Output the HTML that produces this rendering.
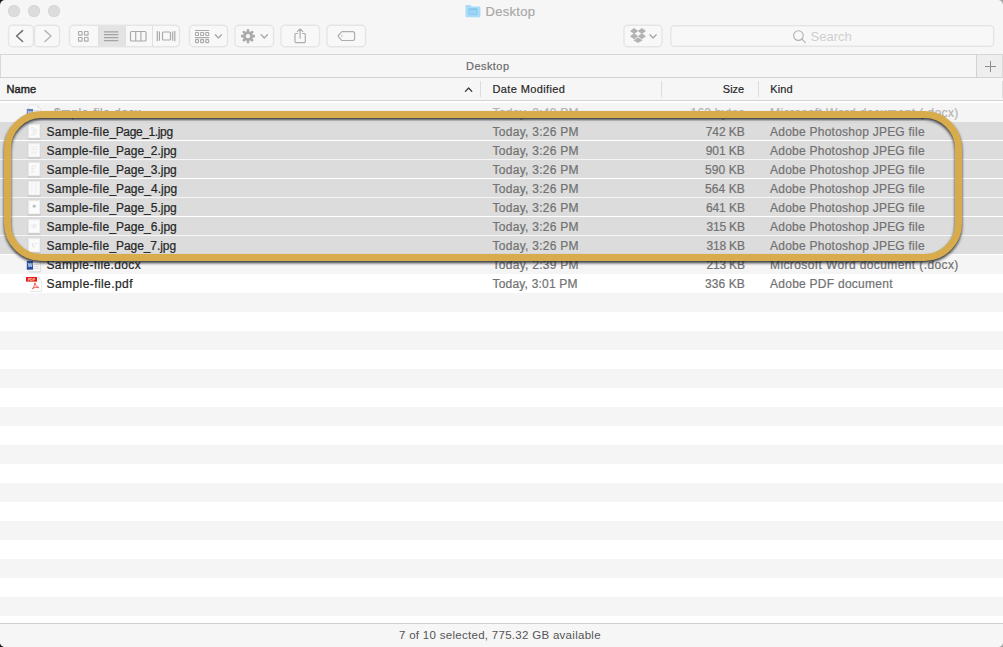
<!DOCTYPE html>
<html>
<head>
<meta charset="utf-8">
<title>Desktop</title>
<style>
html,body{margin:0;padding:0;}
body{width:1003px;height:647px;overflow:hidden;background:linear-gradient(to right,#161616 0,#161616 50%,#a4a4a4 50%,#a4a4a4 100%);font-family:"Liberation Sans",sans-serif;font-size:13px;color:#262626;position:relative;}
#win{position:absolute;left:0;top:0;width:1003px;height:647px;background:#f6f6f6;border-radius:5px 5px 5px 5px;overflow:hidden;}
.abs{position:absolute;}
/* traffic lights */
.tl{position:absolute;top:5px;width:12px;height:12px;border-radius:50%;background:#dcdcdc;box-shadow:inset 0 0 0 0.5px #d0d0d0;}
#title{position:absolute;top:4px;left:485.5px;font-size:13px;letter-spacing:0.3px;color:#a8a8a8;line-height:16px;-webkit-text-stroke:0.2px #a8a8a8;}
#tbline{position:absolute;left:0;top:54px;width:1003px;height:1px;background:#d6d6d6;}
#tabbar{position:absolute;left:0;top:55px;width:1003px;height:22px;background:#f6f6f6;}
#tabbar .t{position:absolute;left:466px;top:4px;font-size:11px;letter-spacing:0.45px;color:#6a6a6a;line-height:14px;-webkit-text-stroke:0.18px #6a6a6a;}
#tabline{position:absolute;left:0;top:77px;width:1003px;height:1px;background:#d2d2d2;}
#plus{position:absolute;left:976px;top:55px;width:27px;height:22px;background:#eeeeee;border-left:1px solid #d2d2d2;box-sizing:border-box;}
/* header */
#hdr{position:absolute;left:0;top:78px;width:1003px;height:22px;background:#f6f6f6;}
#hdr span{position:absolute;top:4px;font-size:11px;line-height:14px;color:#262626;white-space:nowrap;-webkit-text-stroke:0.18px #262626;}
.sep{position:absolute;top:81px;width:1px;height:16px;background:#dcdcdc;}
#hdrline{position:absolute;left:0;top:100px;width:1003px;height:1px;background:#d4d4d4;}
/* rows */
#list{position:absolute;left:0;top:101px;width:1003px;height:522px;background:#fff repeating-linear-gradient(to bottom,#f5f5f5 0,#f5f5f5 19px,#fff 19px,#fff 38px) 0 2px no-repeat;overflow:hidden;}
.row{position:absolute;left:0;width:1003px;height:19px;}
.row.s::before{content:"";position:absolute;left:0;top:0;width:1003px;height:18px;background:#dcdcdc;}
.row>span{position:absolute;top:3px;line-height:15px;font-size:12px;white-space:nowrap;-webkit-text-stroke:0.22px currentColor;}
.row .n{left:46.5px;color:#262626;}
.row .d{left:492.5px;color:#727272;}
.row .z{right:258.2px;color:#727272;text-align:right;}
.row .k{left:770px;color:#727272;}
.row.h .n{color:#a9a9a9;}
.row.h .d,.row.h .z,.row.h .k{color:#b4b4b4;}
.fi{position:absolute;left:26px;top:0;}
#search{position:absolute;left:810.5px;top:29px;font-size:13px;line-height:16px;color:#cfcfcf;}
/* status bar */
#stline{position:absolute;left:0;top:623px;width:1003px;height:1px;background:#cfcfcf;}
#status{position:absolute;left:0;top:624px;width:1003px;height:23px;background:#f6f6f6;text-indent:399px;font-size:11.5px;letter-spacing:0.29px;line-height:22px;color:#555;white-space:nowrap;}
/* annotation */
#hl{position:absolute;left:0;top:100px;filter:drop-shadow(0 2.5px 1.5px rgba(28,30,38,.9));}
</style>
</head>
<body>
<div id="win">
  <div class="tl" style="left:8px"></div>
  <div class="tl" style="left:28px"></div>
  <div class="tl" style="left:48px"></div>
  <div id="title">Desktop</div>

  
  <svg class="abs" style="left:0;top:0" width="1003" height="54" viewBox="0 0 1003 54" fill="none">
    <!-- button frames -->
    <g fill="#f8f8f8" stroke="#e5e5e5" stroke-width="1.4">
      <rect x="8.5" y="25.25" width="25" height="21.5" rx="4"/>
      <rect x="34.5" y="25.25" width="25" height="21.5" rx="4"/>
      <rect x="69.5" y="25.25" width="110" height="21.5" rx="4"/>
      <rect x="189.5" y="25.25" width="38" height="21.5" rx="4"/>
      <rect x="235" y="25.25" width="38.5" height="21.5" rx="4"/>
      <rect x="281" y="25.25" width="38.5" height="21.5" rx="4"/>
      <rect x="327" y="25.25" width="38.5" height="21.5" rx="4"/>
      <rect x="624" y="25.25" width="38" height="21.5" rx="4"/>
      <rect x="670.8" y="25.7" width="322.9" height="20.5" rx="3.5"/>
    </g>
    <!-- selected segment -->
    <rect x="98.5" y="26" width="27" height="20.2" fill="#e3e3e3"/>
    <path d="M98.5 26V46M125.5 26V46M152.5 26V46" stroke="#e0e0e0" stroke-width="1"/>
    <!-- back / forward -->
    <path d="M22.6 30.6L16.6 36L22.6 41.5" stroke="#6e6e6e" stroke-width="1.5" stroke-linecap="round" stroke-linejoin="round"/>
    <path d="M45 30.6L51 36L45 41.5" stroke="#b6b6b6" stroke-width="1.5" stroke-linecap="round" stroke-linejoin="round"/>
    <!-- icon view -->
    <g stroke="#ababab" stroke-width="1.15">
      <rect x="78.5" y="31.5" width="3.6" height="3.6" rx="0.4"/>
      <rect x="84.5" y="31.5" width="3.6" height="3.6" rx="0.4"/>
      <rect x="78.5" y="37.5" width="3.6" height="3.6" rx="0.4"/>
      <rect x="84.5" y="37.5" width="3.6" height="3.6" rx="0.4"/>
    </g>
    <!-- list view -->
    <path d="M104 31.8H118.3M104 34.7H118.3M104 37.7H118.3M104 40.6H118.3" stroke="#a2a2a2" stroke-width="1.2"/>
    <!-- column view -->
    <g stroke="#a8a8a8" stroke-width="1.15">
      <rect x="130.5" y="31.5" width="15.5" height="9.5" rx="1"/>
      <path d="M135.7 31.5V41M140.9 31.5V41"/>
    </g>
    <!-- cover flow -->
    <g stroke="#a8a8a8" stroke-width="1.15">
      <path d="M157.3 31V41.3M159.4 31.5V40.8M172.7 31.5V40.8M174.8 31V41.3"/>
      <rect x="162.5" y="32" width="8" height="8" rx="1"/>
    </g>
    <!-- arrange -->
    <g stroke="#a9a9a9" stroke-width="1.1">
      <path d="M195 30.5H209.3M195 37.6H209.3"/>
      <rect x="195.5" y="32.5" width="3" height="3" rx="0.6"/>
      <rect x="200.6" y="32.5" width="3" height="3" rx="0.6"/>
      <rect x="205.7" y="32.5" width="3" height="3" rx="0.6"/>
      <rect x="195.5" y="39.6" width="3" height="3" rx="0.6"/>
      <rect x="200.6" y="39.6" width="3" height="3" rx="0.6"/>
      <rect x="205.7" y="39.6" width="3" height="3" rx="0.6"/>
    </g>
    <path d="M215.4 34.8L218.4 38L221.4 34.8" stroke="#a6a6a6" stroke-width="1.3" stroke-linecap="round" stroke-linejoin="round"/>
    <!-- gear -->
    <g transform="translate(248 36.15)">
      <g fill="#aaaaaa">
        <rect x="-1.3" y="-7" width="2.6" height="14" rx="0.5"/>
        <rect x="-1.3" y="-7" width="2.6" height="14" rx="0.5" transform="rotate(45)"/>
        <rect x="-1.3" y="-7" width="2.6" height="14" rx="0.5" transform="rotate(90)"/>
        <rect x="-1.3" y="-7" width="2.6" height="14" rx="0.5" transform="rotate(135)"/>
        <circle r="4.9"/>
      </g>
      <circle r="2.1" fill="#f8f8f8"/>
    </g>
    <path d="M261.2 34.8L264.3 38L267.4 34.8" stroke="#a6a6a6" stroke-width="1.3" stroke-linecap="round" stroke-linejoin="round"/>
    <!-- share -->
    <g stroke="#adadad" stroke-width="1.2" stroke-linecap="round" stroke-linejoin="round">
      <path d="M297.6 33.5H295.8Q295 33.5 295 34.3V41.8Q295 42.6 295.8 42.6H304.5Q305.3 42.6 305.3 41.8V34.3Q305.3 33.5 304.5 33.5H302.7"/>
      <path d="M300.1 38.2V29M297.3 31.6L300.1 28.8L302.9 31.6"/>
    </g>
    <!-- tag -->
    <g stroke="#adadad" stroke-width="1.2" stroke-linejoin="round">
      <path d="M342.4 31.7H352.7Q354.6 31.7 354.6 33.6V38.6Q354.6 40.5 352.7 40.5H342.4Q341.8 40.5 341.4 40.1L338.4 36.7Q337.9 36.1 338.4 35.5L341.4 32.1Q341.8 31.7 342.4 31.7Z"/>
      <circle cx="341.8" cy="36.1" r="0.75" fill="#b0b0b0" stroke="none"/>
    </g>
    <!-- dropbox -->
    <g fill="#b2b2b2">
      <path d="M634.1 28.05L638.2 31L634.1 33.95L630 31Z"/>
      <path d="M641.9 28.05L646 31L641.9 33.95L637.8 31Z"/>
      <path d="M634.1 33.35L638.2 36.3L634.1 39.25L630 36.3Z"/>
      <path d="M641.9 33.35L646 36.3L641.9 39.25L637.8 36.3Z"/>
      <path d="M638 37.6L642.6 40.3L638 43L633.4 40.3Z"/>
    </g>
    <path d="M650 34.8L653.1 38L656.2 34.8" stroke="#a6a6a6" stroke-width="1.3" stroke-linecap="round" stroke-linejoin="round"/>
    <!-- search -->
    <g stroke="#b2b2b2" stroke-width="1.1" stroke-linecap="round">
      <circle cx="798.4" cy="35.6" r="4.8"/>
      <path d="M801.9 39.1L805.5 42.7"/>
    </g>
    <!-- folder -->
    <path d="M465.5 6.2Q465.5 5 466.7 5H470.3L471.8 6.6H479.2Q480.4 6.6 480.4 7.8V16Q480.4 17.2 479.2 17.2H466.7Q465.5 17.2 465.5 16Z" fill="#a9dcf8"/>
    <rect x="469" y="8.7" width="8" height="6" fill="#9cd4f6" stroke="#86c7ee" stroke-width="0.9"/>
    <path d="M469 9.4H477" stroke="#86c7ee" stroke-width="1"/>
    <!-- plus -->
  </svg>
  <div id="search">Search</div>
  <div id="tbline"></div>
  <div id="tabbar"><div class="t">Desktop</div></div>
  <div id="plus"></div>
  <div id="tabline"></div>

  <div id="hdr">
    <span style="left:6.5px;-webkit-text-stroke:0.45px #262626;letter-spacing:0.1px">Name</span>
    <span style="left:492.5px;letter-spacing:0.38px">Date Modified</span>
    <span style="right:258.8px">Size</span>
    <span style="left:770.3px;letter-spacing:0.1px">Kind</span>
  </div>
  <div class="sep" style="left:480px"></div>
  <div class="sep" style="left:661px"></div>
  <div class="sep" style="left:758px"></div>
  <div id="hdrline"></div>

  <svg class="abs" style="left:0;top:54px" width="1003" height="48" viewBox="0 54 1003 48" fill="none">
    <path d="M0.5 55V77M1002.5 55V77" stroke="#d9d9d9" stroke-width="1"/>
    <path d="M985 66.5H996M990.5 61V72" stroke="#8e8e8e" stroke-width="1"/>
    <path d="M465.4 91.4L468.6 88L471.8 91.4" stroke="#3a3a3a" stroke-width="1.3" stroke-linecap="round" stroke-linejoin="round"/>
    <path d="M1002.5 81V98" stroke="#dcdcdc" stroke-width="1"/>
  </svg>
  <div id="list">
    <div class="row h" style="top:2px"><svg class="fi" width="18" height="19" viewBox="0 0 18 19" style="opacity:0.7"><path d="M3 2.9H11.2L14.4 6V17.2H3Z" fill="#c4c4c4"/><path d="M2.6 2H11.2L14.3 5.1V16.7H2.6Z" fill="#fbfbfb" stroke="#cdcdcd" stroke-width="0.4"/><path d="M11.2 2V5.1H14.3Z" fill="#dcdcdc"/><path d="M8 7.5H13M8 9.5H13M8 11.5H13M8 13.5H13" stroke="#dcdcdc" stroke-width="1"/><rect x="0.8" y="5.9" width="6.3" height="8.8" fill="#2a4f9e"/><text x="4.1" y="12.3" font-family="Liberation Sans,sans-serif" font-weight="700" font-size="5" fill="#dfe7fa" text-anchor="middle">W</text></svg><span class="n" style="letter-spacing:0.432px">~$mple-file.docx</span><span class="d" style="letter-spacing:0.277px">Today, 2:40 PM</span><span class="z" style="letter-spacing:0.25px">162 bytes</span><span class="k" style="letter-spacing:0.393px">Microsoft Word document (.docx)</span></div>
    <div class="row s" style="top:21px"><svg class="fi" width="18" height="19" viewBox="0 0 18 19"><rect x="1.4" y="1.8" width="13.6" height="15.6" rx="1" fill="#000" fill-opacity="0.05"/><rect x="2" y="2.6" width="12.4" height="14.7" rx="0.6" fill="#000" fill-opacity="0.16"/><rect x="1.8" y="1.8" width="12.8" height="14.8" rx="0.6" fill="#efefef" stroke="#cfcfcf" stroke-width="0.4"/><rect x="3.3" y="3.2" width="9.8" height="12.2" fill="#fbfbfb"/><path d="M5 5.5H8M5 7H10.5M6.5 8.5H11M6.5 10H11M6.5 11.5H10.5M5 13H9" stroke="#e4e4e4" stroke-width="0.7"/></svg><span class="n"><span style="letter-spacing:0.261px">Sample-file</span><span style="letter-spacing:-0.371px">_Page_1.jpg</span></span><span class="d" style="letter-spacing:0.277px">Today, 3:26 PM</span><span class="z" style="letter-spacing:-0.035px">742 KB</span><span class="k" style="letter-spacing:0.243px">Adobe Photoshop JPEG file</span></div>
    <div class="row s" style="top:40px"><svg class="fi" width="18" height="19" viewBox="0 0 18 19"><rect x="1.4" y="1.8" width="13.6" height="15.6" rx="1" fill="#000" fill-opacity="0.05"/><rect x="2" y="2.6" width="12.4" height="14.7" rx="0.6" fill="#000" fill-opacity="0.16"/><rect x="1.8" y="1.8" width="12.8" height="14.8" rx="0.6" fill="#efefef" stroke="#cfcfcf" stroke-width="0.4"/><rect x="3.3" y="3.2" width="9.8" height="12.2" fill="#fbfbfb"/><path d="M4.8 5.5H11.6M4.8 7H11.6M4.8 8.5H11.6M4.8 10H11.6M4.8 11.5H11.6M4.8 13H11.6" stroke="#ebebeb" stroke-width="0.7"/></svg><span class="n"><span style="letter-spacing:0.261px">Sample-file</span><span style="letter-spacing:-0.001px">_Page_2.jpg</span></span><span class="d" style="letter-spacing:0.277px">Today, 3:26 PM</span><span class="z" style="letter-spacing:-0.035px">901 KB</span><span class="k" style="letter-spacing:0.243px">Adobe Photoshop JPEG file</span></div>
    <div class="row s" style="top:59px"><svg class="fi" width="18" height="19" viewBox="0 0 18 19"><rect x="1.4" y="1.8" width="13.6" height="15.6" rx="1" fill="#000" fill-opacity="0.05"/><rect x="2" y="2.6" width="12.4" height="14.7" rx="0.6" fill="#000" fill-opacity="0.16"/><rect x="1.8" y="1.8" width="12.8" height="14.8" rx="0.6" fill="#efefef" stroke="#cfcfcf" stroke-width="0.4"/><rect x="3.3" y="3.2" width="9.8" height="12.2" fill="#fbfbfb"/><path d="M6 5.5H10M5 7H10.5M5 8.5H9M5 10H8M5 11.5H9.5M5 13H7.5" stroke="#e6e6e6" stroke-width="0.7"/></svg><span class="n"><span style="letter-spacing:0.261px">Sample-file</span><span style="letter-spacing:-0.001px">_Page_3.jpg</span></span><span class="d" style="letter-spacing:0.277px">Today, 3:26 PM</span><span class="z" style="letter-spacing:0.085px">590 KB</span><span class="k" style="letter-spacing:0.243px">Adobe Photoshop JPEG file</span></div>
    <div class="row s" style="top:78px"><svg class="fi" width="18" height="19" viewBox="0 0 18 19"><rect x="1.4" y="1.8" width="13.6" height="15.6" rx="1" fill="#000" fill-opacity="0.05"/><rect x="2" y="2.6" width="12.4" height="14.7" rx="0.6" fill="#000" fill-opacity="0.16"/><rect x="1.8" y="1.8" width="12.8" height="14.8" rx="0.6" fill="#efefef" stroke="#cfcfcf" stroke-width="0.4"/><rect x="3.3" y="3.2" width="9.8" height="12.2" fill="#fbfbfb"/><path d="M5 5H7M8.5 5H11.5M5 7H6.5M8.5 7H11.5M5 9H6.5M8.5 9H11.5M5 11H6.5M8.5 11H11.5M5 13H6.5M8.5 13H11" stroke="#e4e4e4" stroke-width="0.7"/></svg><span class="n"><span style="letter-spacing:0.261px">Sample-file</span><span style="letter-spacing:0.029px">_Page_4.jpg</span></span><span class="d" style="letter-spacing:0.277px">Today, 3:26 PM</span><span class="z" style="letter-spacing:0.085px">564 KB</span><span class="k" style="letter-spacing:0.243px">Adobe Photoshop JPEG file</span></div>
    <div class="row s" style="top:97px"><svg class="fi" width="18" height="19" viewBox="0 0 18 19"><rect x="1.4" y="1.8" width="13.6" height="15.6" rx="1" fill="#000" fill-opacity="0.05"/><rect x="2" y="2.6" width="12.4" height="14.7" rx="0.6" fill="#000" fill-opacity="0.16"/><rect x="1.8" y="1.8" width="12.8" height="14.8" rx="0.6" fill="#efefef" stroke="#cfcfcf" stroke-width="0.4"/><rect x="3.3" y="3.2" width="9.8" height="12.2" fill="#fbfbfb"/><circle cx="8.2" cy="8.3" r="1.7" fill="#c9d3cf"/><circle cx="7.6" cy="7.8" r="0.7" fill="#b9a7c9"/><circle cx="8.9" cy="8.0" r="0.7" fill="#9fc3ae"/></svg><span class="n"><span style="letter-spacing:0.261px">Sample-file</span><span style="letter-spacing:-0.001px">_Page_5.jpg</span></span><span class="d" style="letter-spacing:0.277px">Today, 3:26 PM</span><span class="z" style="letter-spacing:-0.075px">641 KB</span><span class="k" style="letter-spacing:0.243px">Adobe Photoshop JPEG file</span></div>
    <div class="row s" style="top:116px"><svg class="fi" width="18" height="19" viewBox="0 0 18 19"><rect x="1.4" y="1.8" width="13.6" height="15.6" rx="1" fill="#000" fill-opacity="0.05"/><rect x="2" y="2.6" width="12.4" height="14.7" rx="0.6" fill="#000" fill-opacity="0.16"/><rect x="1.8" y="1.8" width="12.8" height="14.8" rx="0.6" fill="#efefef" stroke="#cfcfcf" stroke-width="0.4"/><rect x="3.3" y="3.2" width="9.8" height="12.2" fill="#fbfbfb"/><path d="M6 7.2V9.6M7.4 7.2L8 9.6L8.6 7.2M10 7.2V9.6M6 10.6H10.4" stroke="#dedede" stroke-width="0.6" fill="none"/></svg><span class="n"><span style="letter-spacing:0.261px">Sample-file</span><span style="letter-spacing:-0.001px">_Page_6.jpg</span></span><span class="d" style="letter-spacing:0.277px">Today, 3:26 PM</span><span class="z" style="letter-spacing:-0.155px">315 KB</span><span class="k" style="letter-spacing:0.243px">Adobe Photoshop JPEG file</span></div>
    <div class="row s" style="top:135px"><svg class="fi" width="18" height="19" viewBox="0 0 18 19"><rect x="1.4" y="1.8" width="13.6" height="15.6" rx="1" fill="#000" fill-opacity="0.05"/><rect x="2" y="2.6" width="12.4" height="14.7" rx="0.6" fill="#000" fill-opacity="0.16"/><rect x="1.8" y="1.8" width="12.8" height="14.8" rx="0.6" fill="#efefef" stroke="#cfcfcf" stroke-width="0.4"/><rect x="3.3" y="3.2" width="9.8" height="12.2" fill="#fbfbfb"/><path d="M5.6 8.2L6.6 7.2V10M7.8 7.4L9 8.4L7.8 9.6M9.6 7.2H10.6V8.6M6 10.8H9" stroke="#d8d8d8" stroke-width="0.6" fill="none"/></svg><span class="n"><span style="letter-spacing:0.261px">Sample-file</span><span style="letter-spacing:-0.071px">_Page_7.jpg</span></span><span class="d" style="letter-spacing:0.277px">Today, 3:26 PM</span><span class="z" style="letter-spacing:-0.155px">318 KB</span><span class="k" style="letter-spacing:0.243px">Adobe Photoshop JPEG file</span></div>
    <div class="row " style="top:154px"><svg class="fi" width="18" height="19" viewBox="0 0 18 19" style="opacity:1"><path d="M3 2.9H11.2L14.4 6V17.2H3Z" fill="#c4c4c4"/><path d="M2.6 2H11.2L14.3 5.1V16.7H2.6Z" fill="#fbfbfb" stroke="#cdcdcd" stroke-width="0.4"/><path d="M11.2 2V5.1H14.3Z" fill="#dcdcdc"/><path d="M8 7.5H13M8 9.5H13M8 11.5H13M8 13.5H13" stroke="#dcdcdc" stroke-width="1"/><rect x="0.8" y="5.9" width="6.3" height="8.8" fill="#2a4f9e"/><text x="4.1" y="12.3" font-family="Liberation Sans,sans-serif" font-weight="700" font-size="5" fill="#dfe7fa" text-anchor="middle">W</text></svg><span class="n" style="letter-spacing:0.365px">Sample-file.docx</span><span class="d" style="letter-spacing:0.277px">Today, 2:39 PM</span><span class="z" style="letter-spacing:-0.155px">213 KB</span><span class="k" style="letter-spacing:0.393px">Microsoft Word document (.docx)</span></div>
    <div class="row " style="top:173px"><svg class="fi" width="18" height="19" viewBox="0 0 18 19"><path d="M4.2 3H12L15.6 6.4V17.4H4.2Z" fill="#cdcdcd"/><path d="M3.9 2.3H12L15.3 5.6V16.9H3.9Z" fill="#fcfcfc"/><path d="M12 2.3V5.6H15.3Z" fill="#e2e2e2"/><rect x="0" y="3" width="11" height="4.6" fill="#e5190d"/><text x="5.5" y="6.5" font-family="Liberation Sans,sans-serif" font-weight="700" font-size="3.6" fill="#ffd9d4" text-anchor="middle">PDF</text><path d="M6.4 14.6C7.8 13.4 8.6 11.4 8.7 9.4C8.8 8.4 9.4 8.6 9.3 9.6C9.2 11 10.4 12.6 12.4 13.2C13.2 13.5 12.6 13.9 11.8 13.6C10.2 13.1 8.2 13.4 6.9 14.4" fill="none" stroke="#e8352a" stroke-width="0.8" stroke-linecap="round"/></svg><span class="n" style="letter-spacing:0.425px">Sample-file.pdf</span><span class="d" style="letter-spacing:0.192px">Today, 3:01 PM</span><span class="z" style="letter-spacing:0.085px">336 KB</span><span class="k" style="letter-spacing:0.26px">Adobe PDF document</span></div>
  </div>

  <div id="stline"></div>
  <div id="status">7 of 10 selected, 775.32 GB available</div>

  <svg id="hl" width="1003" height="175" viewBox="0 100 1003 175" fill="none"><rect x="7.5" y="114.5" width="951" height="143" rx="34" stroke="#d8ac4c" stroke-width="7"/></svg>
</div>
</body>
</html>
